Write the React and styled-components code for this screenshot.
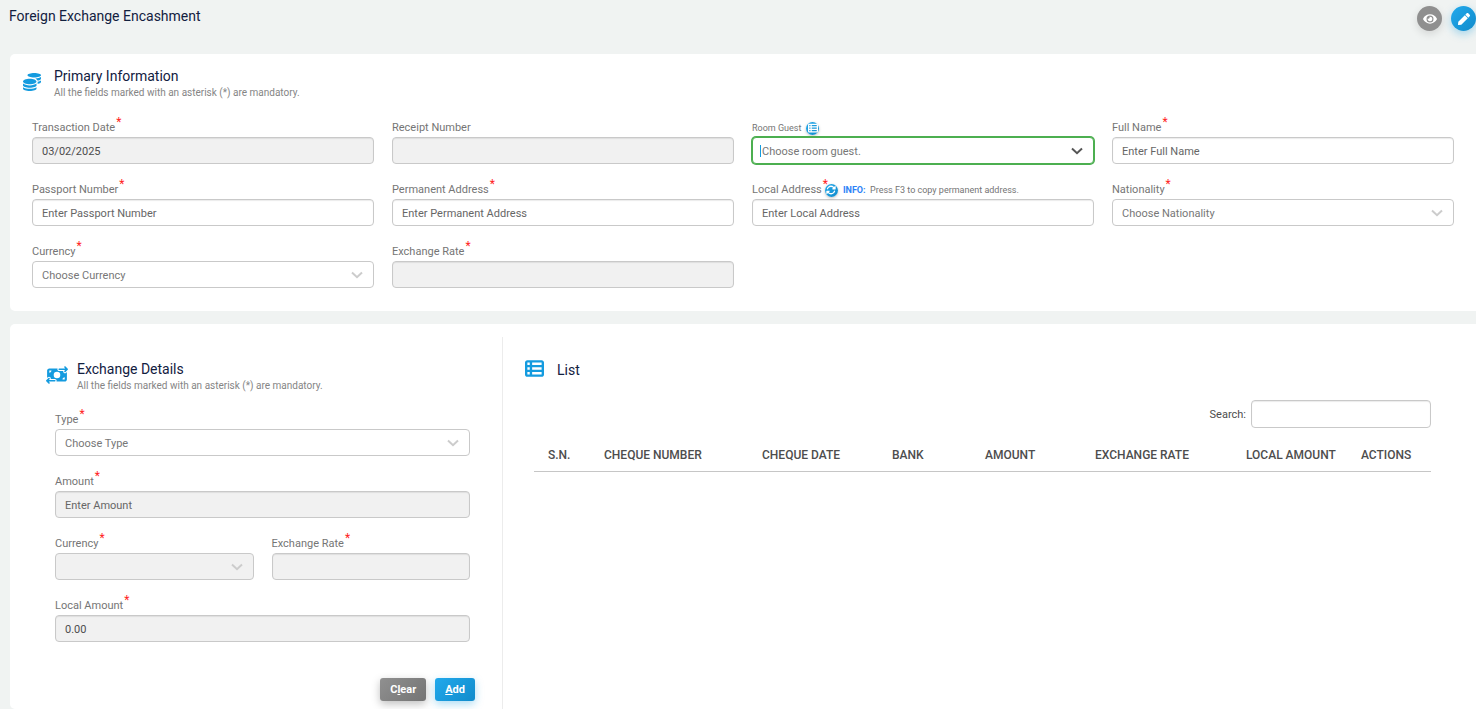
import styled, { createGlobalStyle, css } from "styled-components";
import { FaCoins, FaEye, FaPen } from "react-icons/fa";
import { FaMoneyBillTransfer, FaRotate, FaTableList } from "react-icons/fa6";

const GlobalStyle = createGlobalStyle`
	* {
		box-sizing: border-box;
	}
	body {
		margin: 0;
		background: #f0f3f2;
		color: #4d4d4d;
		font-family: Roboto, "Liberation Sans", sans-serif;
		font-size: 11px;
	}
	input, select, button {
		font-family: inherit;
		font-size: inherit;
	}
`;
const Page = styled.div`
	display: flex;
	flex-direction: column;
	min-height: 100vh;
	padding-left: 10px;
`;
const TopBar = styled.header`
	display: flex;
	justify-content: space-between;
	height: 54px;
	padding-top: 6px;
`;
const PageTitle = styled.h1`
	margin: 0 0 0 -1px;
	color: #12203f;
	font-size: 14px;
	font-weight: 400;
	line-height: 20px;
`;
const TopActions = styled.div`
	display: flex;
	gap: 9px;
`;
const blue = css`
	background: linear-gradient(135deg, #21a9ec, #128bcb);
	box-shadow: 0 3px 8px rgba(20, 155, 220, 0.35);
`;
const grey = css`
	background: linear-gradient(135deg, #909090, #747474);
	box-shadow: 0 3px 8px rgba(0, 0, 0, 0.25);
`;
const RoundButton = styled.button`
	display: flex;
	align-items: center;
	justify-content: center;
	width: 25px;
	height: 25px;
	padding: 0;
	border: 0;
	border-radius: 50%;
	color: #fff;
	font-size: ${({ $primary }) => ($primary ? 12 : 14)}px;
	${({ $primary }) => ($primary ? blue : css`
		background: #8f8f8f;
		box-shadow: 0 3px 8px rgba(0, 0, 0, 0.12);
	`)}
`;
const Card = styled.section`
	background: #fff;
	border-radius: 5px 0 0 5px;
`;
const PrimaryCard = styled(Card)`
	margin-bottom: 13px;
	padding: 13px 22px 23px;
`;
const DetailsCard = styled(Card)`
	display: grid;
	flex: 1;
	grid-template-columns: 493fr 973fr;
	padding-top: 13px;
`;
const Heading = styled.div`
	display: flex;
	align-items: center;
	gap: ${({ $gap }) => $gap}px;
	margin-left: -9px;
	& > svg {
		flex: none;
		margin-bottom: 3px;
		color: #149bdf;
	}
`;
const Title = styled.h2`
	margin: 0;
	color: #12203f;
	font-size: 14px;
	font-weight: 400;
	line-height: 19px;
`;
const Hint = styled.p`
	margin: 0;
	color: #858585;
	font-size: 10px;
	line-height: 14px;
`;
const FieldGrid = styled.div`
	display: grid;
	grid-template-columns: repeat(${({ $columns }) => $columns}, minmax(0, 1fr));
	gap: 18px;
	margin-top: ${({ $top }) => $top}px;
`;
const FieldBox = styled.div`
	grid-column: ${({ $wide }) => ($wide ? "1 / -1" : "auto")};
`;
const LabelRow = styled.div`
	display: flex;
	align-items: center;
	height: 16px;
	margin-bottom: 1px;
	color: #757575;
`;
const Label = styled.label`
	font-size: ${({ $small }) => ($small ? 9 : 11)}px;
	line-height: 16px;
`;
const Star = styled.span`
	align-self: flex-start;
	margin: -4px 0 0 1px;
	color: #f22;
	font-size: 12px;
	line-height: 12px;
`;
const MiniButton = styled.button`
	${blue}
	display: flex;
	align-items: center;
	justify-content: center;
	width: 13px;
	height: 13px;
	margin-left: ${({ $left }) => $left}px;
	padding: 0;
	border: 0;
	border-radius: 50%;
	color: #fff;
	font-size: 10px;
	box-shadow: 0 1px 3px rgba(0, 0, 0, 0.25);
`;
const Info = styled.span`
	margin-left: 5px;
	font-size: 9px;
	white-space: pre;
	& b {
		color: #2d83f7;
		font-weight: 700;
	}
	& kbd {
		font-family: inherit;
		font-size: 9px;
	}
`;
const control = css`
	display: block;
	width: 100%;
	height: 27px;
	padding: 1px 9px 0;
	border: 1px solid #c9c9c9;
	border-radius: 4px;
	outline: 0;
	background: #fff;
	color: #4d4d4d;
	&:disabled {
		background: #f1f1f1;
		opacity: 1;
	}
`;
const Input = styled.input`
	${control}
	box-shadow: inset 0 1px 1px rgba(0, 0, 0, 0.08);
	&::placeholder {
		color: #666;
		opacity: 1;
	}
`;
const SelectBox = styled.div`
	position: relative;
	& svg {
		position: absolute;
		top: 10px;
		right: 11px;
		pointer-events: none;
		color: ${({ $active }) => ($active ? "#555" : "#ccc")};
	}
`;
const Select = styled.select`
	${control}
	appearance: none;
	color: #777;
	${({ $active }) => $active && css`
		border-color: #4caf50;
		box-shadow: 0 0 0 1px #4caf50;
	`}
`;
const Caret = styled.span`
	position: absolute;
	top: 8px;
	left: 8px;
	width: 1px;
	height: 12px;
	background: #149bdf;
`;
const FormPanel = styled.div`
	padding: 23px 32px 8px 45px;
	border-right: 1px solid #ececec;
`;
const Buttons = styled.div`
	display: flex;
	justify-content: flex-end;
	gap: 9px;
	margin: 36px -5px 0 0;
`;
const Button = styled.button`
	height: 23px;
	padding: 0 10px;
	border: 0;
	border-radius: 3px;
	color: #fff;
	font-weight: 700;
	${({ $primary }) => ($primary ? blue : grey)}
`;
const ListPanel = styled.div`
	padding: 22px 45px 0 31px;
`;
const SearchRow = styled.div`
	display: flex;
	align-items: center;
	justify-content: flex-end;
	gap: 5px;
	margin-top: 19px;
`;
const SearchInput = styled(Input)`
	width: 180px;
	height: 28px;
`;
const Table = styled.table`
	width: 100%;
	margin-top: 12px;
	border-collapse: collapse;
	table-layout: fixed;
	& th {
		height: 31px;
		padding: 0 0 0 14px;
		border-bottom: 1px solid #c6c6c6;
		font-size: 12px;
		font-weight: 500;
		text-align: left;
		white-space: nowrap;
	}
`;

const Chevron = () => (
	<svg width="12" height="8" viewBox="0 0 12 8" fill="none" stroke="currentColor" strokeWidth="2">
		<path d="M1 1.5 6 6.2 11 1.5" />
	</svg>
);

const Field = ({ id, label, required, small, wide, select, active, placeholder, extra, ...rest }) => (
	<FieldBox $wide={wide}>
		<LabelRow>
			<Label htmlFor={id} $small={small}>{label}</Label>
			{required && <Star>*</Star>}
			{extra}
		</LabelRow>
		{select ? (
			<SelectBox $active={active}>
				<Select id={id} $active={active} {...rest}>
					<option>{placeholder}</option>
				</Select>
				{active && <Caret />}
				<Chevron />
			</SelectBox>
		) : (
			<Input id={id} placeholder={placeholder} {...rest} />
		)}
	</FieldBox>
);

const columns = [
	["S.N.", 56],
	["CHEQUE NUMBER", 158],
	["CHEQUE DATE", 130],
	["BANK", 93],
	["AMOUNT", 110],
	["EXCHANGE RATE", 151],
	["LOCAL AMOUNT", 115],
	["ACTIONS", 84],
];

const mandatory = "All the fields marked with an asterisk (*) are mandatory.";

const App = () => (
	<>
		<GlobalStyle />
		<Page>
			<TopBar>
				<PageTitle>Foreign Exchange Encashment</PageTitle>
				<TopActions>
					<RoundButton aria-label="View"><FaEye /></RoundButton>
					<RoundButton aria-label="Edit" $primary><FaPen /></RoundButton>
				</TopActions>
			</TopBar>
			<PrimaryCard>
				<Heading $gap={13}>
					<FaCoins size={18} />
					<div>
						<Title>Primary Information</Title>
						<Hint>{mandatory}</Hint>
					</div>
				</Heading>
				<FieldGrid $columns={4} $top={20}>
					<Field id="date" label="Transaction Date" required defaultValue="03/02/2025" disabled />
					<Field id="receipt" label="Receipt Number" disabled />
					<Field
						id="guest"
						label="Room Guest"
						placeholder="Choose room guest."
						small
						select
						active
						extra={<MiniButton aria-label="Guest list" $left={5}><FaTableList /></MiniButton>}
					/>
					<Field id="name" label="Full Name" required placeholder="Enter Full Name" />
					<Field id="passport" label="Passport Number" required placeholder="Enter Passport Number" />
					<Field id="permanent" label="Permanent Address" required placeholder="Enter Permanent Address" />
					<Field
						id="local"
						label="Local Address"
						required
						placeholder="Enter Local Address"
						extra={
							<>
								<MiniButton aria-label="Copy address" $left={-3}><FaRotate /></MiniButton>
								<Info><b>INFO:</b>  Press <kbd>F3</kbd> to copy permanent address.</Info>
							</>
						}
					/>
					<Field id="nationality" label="Nationality" required select placeholder="Choose Nationality" />
					<Field id="currency" label="Currency" required select placeholder="Choose Currency" />
					<Field id="rate" label="Exchange Rate" required disabled />
				</FieldGrid>
			</PrimaryCard>
			<DetailsCard>
				<FormPanel>
					<Heading $gap={9}>
						<FaMoneyBillTransfer size={22} />
						<div>
							<Title>Exchange Details</Title>
							<Hint>{mandatory}</Hint>
						</div>
					</Heading>
					<FieldGrid $columns={2} $top={19}>
						<Field id="type" label="Type" required wide select placeholder="Choose Type" />
						<Field id="amount" label="Amount" required wide placeholder="Enter Amount" disabled />
						<Field id="detail-currency" label="Currency" required select disabled />
						<Field id="detail-rate" label="Exchange Rate" required disabled />
						<Field id="local-amount" label="Local Amount" required wide defaultValue="0.00" disabled />
					</FieldGrid>
					<Buttons>
						<Button>C<u>l</u>ear</Button>
						<Button $primary><u>A</u>dd</Button>
					</Buttons>
				</FormPanel>
				<ListPanel>
					<Heading $gap={13}>
						<FaTableList size={19} />
						<Title>List</Title>
					</Heading>
					<SearchRow>
						<label htmlFor="search">Search:</label>
						<SearchInput id="search" />
					</SearchRow>
					<Table>
						<colgroup>
							{columns.map(([name, width]) => <col key={name} width={width} />)}
						</colgroup>
						<thead>
							<tr>{columns.map(([name]) => <th key={name} scope="col">{name}</th>)}</tr>
						</thead>
					</Table>
				</ListPanel>
			</DetailsCard>
		</Page>
	</>
);
export default App;
